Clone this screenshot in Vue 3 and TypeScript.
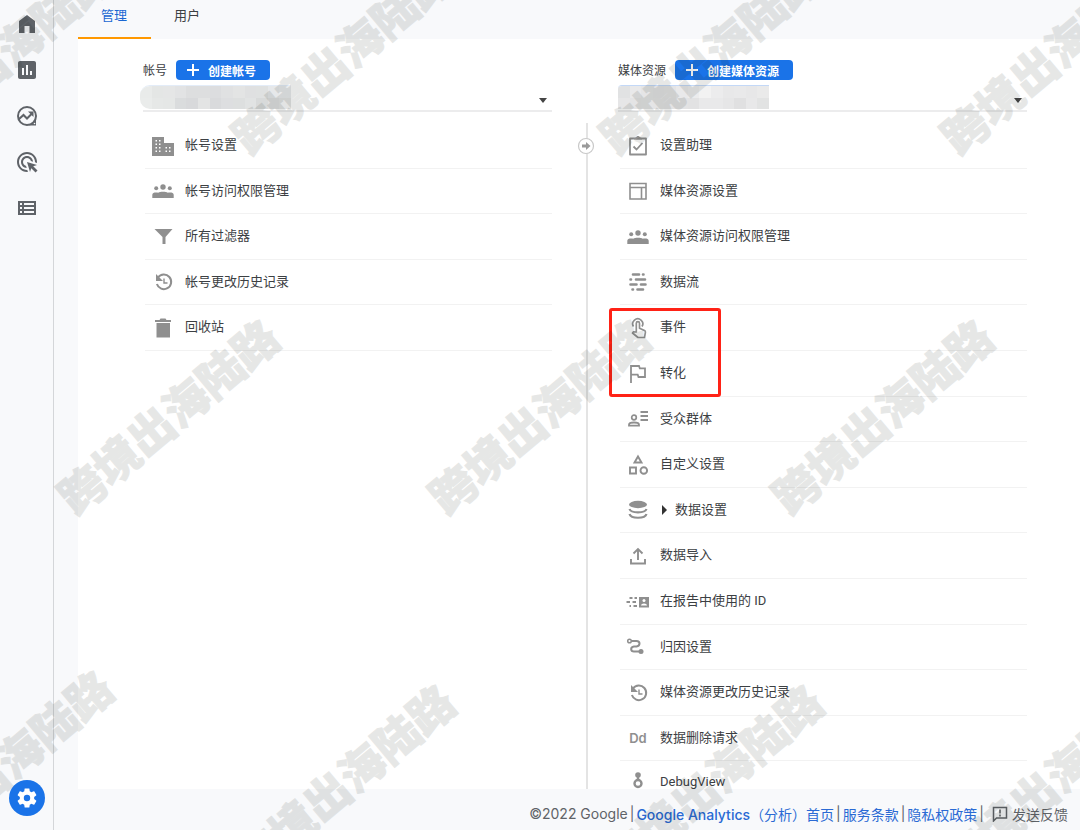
<script setup lang="ts">
import { ref } from 'vue'

interface Entry {
  icon: string
  label: string
  expandable?: boolean
  marked?: boolean
}

interface Column {
  id: string
  title: string
  create: string
  mosaic: string[][]
  entries: Entry[]
}

const navIcons = [
  { icon: 'home', label: '首页' },
  { icon: 'reports', label: '报告' },
  { icon: 'explore', label: '探索' },
  { icon: 'ads', label: '广告' },
  { icon: 'table', label: '配置' },
]

const tabs = ['管理', '用户']
const activeTab = ref(0)

const columns: Column[] = [
  {
    id: 'account',
    title: '帐号',
    create: '创建帐号',
    mosaic: [
      ['e9ebea', 'e4e6e5', 'e5e6e6', 'e2e3e4', 'dddedf', 'dddedf', 'dcdddf', 'e0e1e2', 'e3e4e4', 'dfe0e1', 'dfe1e1', 'e6e8ea', 'e9ebed'],
      ['eaeceb', 'e6e8e7', 'e5e7e6', 'dadcdd', 'd8d9db', 'e3e4e4', 'd9dadc', 'dddee0', 'dddfdf', 'e1e3e3', 'd8dada', 'dfe0e1', 'e3e4e4'],
    ],
    entries: [
      { icon: 'building', label: '帐号设置' },
      { icon: 'groups', label: '帐号访问权限管理' },
      { icon: 'filter', label: '所有过滤器' },
      { icon: 'history', label: '帐号更改历史记录' },
      { icon: 'trash', label: '回收站' },
    ],
  },
  {
    id: 'property',
    title: '媒体资源',
    create: '创建媒体资源',
    mosaic: [
      ['e1e2e3', 'e9e9ea', 'e5e5e6', 'e3e3e4', 'e4e4e5', 'e9e9ea', 'ececed', 'f2f2f2', 'ececed', 'e8e8e9', 'e9e9ea', 'e7e7e8', 'eaeaea'],
      ['e6e6e7', 'e4e4e5', 'e5e5e6', 'e4e4e5', 'e3e3e4', 'e3e3e4', 'e2e2e3', 'e9e9ea', 'e9e9ea', 'e6e6e7', 'e0e0e1', 'e8e8e9', 'e2e3e3'],
    ],
    entries: [
      { icon: 'assistant', label: '设置助理' },
      { icon: 'layout', label: '媒体资源设置' },
      { icon: 'groups', label: '媒体资源访问权限管理' },
      { icon: 'stream', label: '数据流' },
      { icon: 'touch', label: '事件', marked: true },
      { icon: 'flag', label: '转化' },
      { icon: 'audience', label: '受众群体' },
      { icon: 'shapes', label: '自定义设置' },
      { icon: 'database', label: '数据设置', expandable: true },
      { icon: 'upload', label: '数据导入' },
      { icon: 'identity', label: '在报告中使用的 ID' },
      { icon: 'route', label: '归因设置' },
      { icon: 'history', label: '媒体资源更改历史记录' },
      { icon: 'dd', label: '数据删除请求' },
      { icon: 'debug', label: 'DebugView' },
    ],
  },
]

const icons: Record<string, string> = {
  home: '<path d="M12 3 4 9v12h5.500v-7h5v7H20V9z"/>',
  reports:
    '<path d="M19 3H5c-1.100 0-2 .9-2 2v14c0 1.100.9 2 2 2h14c1.100 0 2-.9 2-2V5c0-1.100-.9-2-2-2zM9 17H7v-7h2v7zm4 0h-2V7h2v10zm4 0h-2v-4h2v4z"/>',
  explore:
    '<circle cx="12" cy="12" r="9" fill="none" stroke="currentColor" stroke-width="2"/><path d="M21 12v9.500h-9.500c5 0 9.500-4.500 9.500-9.500z"/><path d="M3.500 15.500 8.500 11l3.500 3.500L17 9.500" fill="none" stroke="currentColor" stroke-width="2"/><path d="M13 7.500h5.500V13z"/><circle cx="19.500" cy="19.500" r=".8" fill="#f8f9fb"/>',
  ads: '<path d="M11.710 17.990C8.530 17.840 6 15.220 6 12c0-3.310 2.690-6 6-6 3.220 0 5.840 2.530 5.990 5.710l-2.100-.63C15.480 9.310 13.890 8 12 8c-2.210 0-4 1.790-4 4 0 1.890 1.310 3.480 3.080 3.890l.63 2.100zM22 12c0 .3-.01.6-.04.9l-1.970-.59c.01-.1.01-.21.01-.31 0-4.420-3.580-8-8-8s-8 3.580-8 8 3.580 8 8 8c.1 0 .21 0 .31-.01l.59 1.970c-.3.03-.6.04-.9.04-5.520 0-10-4.480-10-10S6.480 2 12 2s10 4.480 10 10zm-3.770 4.260L22 15l-10-3 3 10 1.260-3.770 4.270 4.270 1.980-1.980-4.280-4.260z"/>',
  table:
    '<path fill-rule="evenodd" d="M3 5h18v14H3zM5 7v2h2V7zm4 0v2h10V7zM5 11v2h2v-2zm4 0v2h10v-2zM5 15v2h2v-2zm4 0v2h10v-2z"/>',
  gear: '<path fill-rule="evenodd" d="M19.140 12.940c.04-.3.06-.61.06-.94 0-.32-.02-.64-.07-.94l2.030-1.580c.18-.14.23-.41.12-.61l-1.920-3.320c-.12-.22-.37-.29-.59-.22l-2.390.96c-.5-.38-1.030-.7-1.620-.94l-.36-2.540c-.04-.24-.24-.41-.48-.41h-3.840c-.24 0-.43.17-.47.41l-.36 2.540c-.59.24-1.130.57-1.620.94l-2.390-.96c-.22-.08-.47 0-.59.22L2.740 8.870c-.12.21-.08.47.12.61l2.030 1.580c-.05.3-.09.63-.09.94s.02.64.07.94l-2.030 1.580c-.18.14-.23.41-.12.61l1.920 3.320c.12.22.37.29.59.22l2.390-.96c.5.38 1.030.7 1.620.94l.36 2.540c.05.24.24.41.48.41h3.840c.24 0 .44-.17.47-.41l.36-2.540c.59-.24 1.130-.56 1.620-.94l2.390.96c.22.08.47 0 .59-.22l1.920-3.320c.12-.22.07-.47-.12-.61zM12 15.200a3.200 3.200 0 1 1 0-6.400 3.200 3.200 0 0 1 0 6.400z"/>',
  building:
    '<path d="M1 3h12v6h10v13H1z"/><path fill="#fff" d="M4.500 6h1.500v1.500H4.500zM8 6h1.500v1.500H8zM4.500 9.500H6V11H4.500zM8 9.500h1.500V11H8zM4.500 13H6v1.500H4.500zM8 13h1.500v1.500H8zM4.500 16.500H6V18H4.500zM8 16.500h1.500V18H8zM14.500 13H16v1.500h-1.500zM18 13h1.500v1.500H18zM14.500 16.500H16V18h-1.500zM18 16.500h1.500V18H18z"/>',
  groups:
    '<circle cx="12" cy="8" r="2.700"/><circle cx="5.200" cy="9.300" r="2"/><circle cx="18.800" cy="9.300" r="2"/><path d="M1.300 19v-3.200C1.300 14 3 13.500 5 13.500c1 0 1.600.1 2.200.2C8.300 13 10 12.700 12 12.700s3.700.3 4.800 1c.6-.1 1.200-.2 2.200-.2 2 0 3.700.5 3.700 2.300V19z"/>',
  filter: '<path d="M3.500 4h18l-7 8v7h-3v-7z"/>',
  history:
    '<path d="M7 7.500A7.300 7.300 0 1 1 5.900 14" fill="none" stroke="currentColor" stroke-width="2"/><path d="M5 4v7h7z"/><path d="M13 8.500v4.500h3.500" fill="none" stroke="currentColor" stroke-width="1.400"/>',
  trash: '<path d="M9.500 2.500h5l1 1.500h4.500v2H4V4h4.500zM5.500 7h13.500v14.500H5.500z"/>',
  assistant:
    '<path d="M4 4.500h16v16H4z" fill="none" stroke="currentColor" stroke-width="1.800" stroke-linejoin="round"/><path d="m7.500 12.500 3 3 6-6.500" fill="none" stroke="currentColor" stroke-width="1.800"/><path d="M8 5.500c0-1.500 1-2 2-2 .3-1 1-1.500 2-1.500s1.700.5 2 1.500c1 0 2 .5 2 2z"/>',
  layout: '<path d="M4 4.500h16v15.500H4zM4 8.500h16M15.500 8.500V20" fill="none" stroke="currentColor" stroke-width="1.600"/>',
  stream:
    '<path d="M7 4.500h6M17 4.500h.5M4.500 9.500h.5M10 9.500h9M4.500 14.500h6M15 14.500h4.500M6.500 19.500h.5M11.500 19.500h5.500" fill="none" stroke="currentColor" stroke-width="2.600" stroke-linecap="round"/>',
  touch:
    '<path d="M7.500 10.500a5 5 0 1 1 8.500 0M10.300 16V7.200a1.600 1.600 0 0 1 3.200 0v5l5 2.300c.8.4 1 1 .9 1.800l-.9 5.200h-6.500L6.500 17l1-1.200z" fill="none" stroke="currentColor" stroke-width="1.700" stroke-linejoin="round"/>',
  flag: '<path d="M5 21V4h8l.8 2.300H19v8.700h-6.500l-.8-2.300H5" fill="none" stroke="currentColor" stroke-width="1.800"/>',
  audience:
    '<circle cx="8" cy="10.500" r="2.300" fill="none" stroke="currentColor" stroke-width="1.700"/><path d="M3 18.700v-1c0-1.600 2.500-2.200 5-2.200s5 .6 5 2.200v1zM14.500 5H22M14.500 9H22M14.500 13H22" fill="none" stroke="currentColor" stroke-width="1.800"/>',
  shapes:
    '<path d="m12 3.500 3.500 6h-7zM4 14.500h6v6H4z" fill="none" stroke="currentColor" stroke-width="1.900"/><circle cx="17.800" cy="17.500" r="3.300" fill="none" stroke="currentColor" stroke-width="1.900"/>',
  database:
    '<ellipse cx="12" cy="6.500" rx="9" ry="3.700"/><path d="M3.500 11c1.500 4.500 15.500 4.500 17 0M3.500 16c1.500 5 15.500 5 17 0" fill="none" stroke="currentColor" stroke-width="2.200"/>',
  upload:
    '<path d="M5 15v4.500h14V15M12 16V5.500M7.500 9.500 12 5l4.500 4.500" fill="none" stroke="currentColor" stroke-width="1.900"/>',
  identity:
    '<path d="M3.500 8h3M8.500 8h2.500M.5 12h3.500M6.500 12h3.500M3.500 16h1.500M7.500 16h3.500" fill="none" stroke="currentColor" stroke-width="1.800"/><path d="M13 7h10v10.500H13z"/><circle cx="18" cy="10.500" r="1.500" fill="#fff"/><path d="M15 15.500c0-2.800 6-2.800 6 0z" fill="#fff"/>',
  route:
    '<circle cx="3.500" cy="6" r="1.800" fill="none" stroke="currentColor" stroke-width="1.500"/><path d="M5.500 6h5c4 0 4 5 0 5.500H8c-4 .5-3.500 5 0 5h6" fill="none" stroke="currentColor" stroke-width="2"/><circle cx="15" cy="16.500" r="2.500"/>',
  debug:
    '<circle cx="12" cy="3" r="2.800"/><path d="M12 3v5" stroke="currentColor" stroke-width="2.400"/><circle cx="12" cy="11.500" r="3.500" fill="none" stroke="currentColor" stroke-width="2.400"/>',
}

const stamps = [
  { x: 1, y: 54 },
  { x: 341, y: 55 },
  { x: 709, y: 55 },
  { x: 1050, y: 55 },
  { x: 167, y: 415 },
  { x: 538, y: 415 },
  { x: 881, y: 415 },
  { x: 1, y: 766 },
  { x: 343, y: 780 },
  { x: 711, y: 780 },
  { x: 1050, y: 780 },
]
</script>

<template>
  <div class="app">
    <nav class="rail" aria-label="主导航">
      <button v-for="n in navIcons" :key="n.icon" class="rail-btn" type="button" :aria-label="n.label">
        <svg viewBox="0 0 24 24" fill="currentColor" v-html="icons[n.icon]" />
      </button>
      <button class="gear" type="button" aria-label="管理">
        <svg viewBox="0 0 24 24" fill="currentColor" v-html="icons.gear" />
      </button>
    </nav>

    <div class="main">
      <header class="tabs" role="tablist">
        <button
          v-for="(t, i) in tabs"
          :key="t"
          class="tab"
          :class="{ active: i === activeTab }"
          type="button"
          role="tab"
          :aria-selected="i === activeTab"
          @click="activeTab = i"
        >
          {{ t }}
        </button>
      </header>

      <main class="panel">
        <template v-for="(c, ci) in columns" :key="c.id">
          <div v-if="ci > 0" class="divider">
            <svg class="knob" viewBox="0 0 18 18" aria-hidden="true">
              <circle cx="9" cy="9" r="7.500" fill="#fff" stroke="#c9c9c9" stroke-width="1.200" />
              <path d="M5 7.500h4V5l4.500 4L9 13v-2.500H5z" fill="#9a9a9a" />
            </svg>
          </div>
          <section class="column">
            <div class="head">
              <label class="title" :for="c.id">{{ c.title }}</label>
              <button class="create" type="button">
                <svg viewBox="0 0 14 14" aria-hidden="true"><path d="M7 1v12M1 7h12" stroke="#fff" stroke-width="2" /></svg>
                <span>{{ c.create }}</span>
              </button>
            </div>
            <div class="picker">
              <select :id="c.id"><option value=""></option></select>
              <svg class="mosaic" :class="c.id" viewBox="0 0 13 2" preserveAspectRatio="none" shape-rendering="crispEdges" aria-hidden="true">
                <template v-for="(line, r) in c.mosaic" :key="r">
                  <rect v-for="(tone, k) in line" :key="k" :x="k" :y="r" width="1" height="1" :fill="'#' + tone" />
                </template>
              </svg>
              <svg class="caret" viewBox="0 0 8 5" aria-hidden="true"><path d="M0 0h8L4 5z" fill="#444" /></svg>
            </div>
            <ul class="list">
              <li v-for="e in c.entries" :key="e.label" class="row">
                <a href="#" class="link">
                  <span v-if="e.icon === 'dd'" class="icon letters">Dd</span>
                  <svg v-else class="icon" viewBox="0 0 24 24" fill="currentColor" aria-hidden="true" v-html="icons[e.icon]" />
                  <svg v-if="e.expandable" class="expand" viewBox="0 0 5 10" aria-hidden="true"><path d="M0 0v10l5-5z" fill="#333" /></svg>
                  <span>{{ e.label }}</span>
                </a>
                <span v-if="e.marked" class="marker" />
              </li>
            </ul>
          </section>
        </template>
      </main>

      <footer class="foot">
        <span>©2022 Google</span>
        <span>|</span>
        <a href="#"><b>Google Analytics</b>（分析）首页</a>
        <span>|</span>
        <a href="#">服务条款</a>
        <span>|</span>
        <a href="#">隐私权政策</a>
        <span>|</span>
        <button class="feedback" type="button">
          <svg viewBox="0 0 16 16" aria-hidden="true">
            <path d="M1.500 15V1.500h13v10.500H4.500z" fill="none" stroke="currentColor" stroke-width="1.500" />
            <path d="M8 3.500v4M8 8.500v2" stroke="currentColor" stroke-width="1.600" />
          </svg>
          <span>发送反馈</span>
        </button>
      </footer>
    </div>

    <div class="stamps" aria-hidden="true">
      <span v-for="(s, i) in stamps" :key="i" class="stamp" :style="{ left: s.x + 'px', top: s.y + 'px' }">跨境出海陆路</span>
    </div>
  </div>
</template>

<style>
body {
  margin: 0;
}
</style>

<style scoped>
.app {
  position: relative;
  display: flex;
  height: 100vh;
  overflow: hidden;
  background: #f8f9fb;
  color: #3c4043;
  font-family: Roboto, "Noto Sans CJK SC", sans-serif;
  font-size: 13px;
}

button {
  border: 0;
  padding: 0;
  margin: 0;
  background: none;
  font: inherit;
  color: inherit;
  cursor: pointer;
}

svg {
  display: block;
  flex: none;
}

.rail {
  flex: none;
  box-sizing: border-box;
  width: 54px;
  padding: 12px 0 14px;
  border-right: 1px solid #d4d6d9;
  display: flex;
  flex-direction: column;
  align-items: center;
  gap: 22px;
  color: #5f6368;
}

.rail-btn,
.rail-btn svg {
  width: 24px;
  height: 24px;
}

.gear {
  display: flex;
  align-items: center;
  justify-content: center;
  width: 36px;
  height: 36px;
  margin-top: auto;
  border-radius: 50%;
  background: #1a73e8;
  color: #fff;
}

.gear svg {
  width: 24px;
  height: 24px;
}

.main {
  flex: 1;
  min-width: 0;
  display: flex;
  flex-direction: column;
}

.tabs {
  flex: none;
  display: flex;
  height: 39px;
  padding-left: 24px;
}

.tab {
  box-sizing: border-box;
  padding: 0 24px 8px 23px;
  border-bottom: 2px solid transparent;
}

.tab.active {
  color: #1a67d2;
  border-bottom-color: #ff9800;
}

.panel {
  flex: 1;
  min-height: 0;
  overflow: hidden;
  box-sizing: border-box;
  margin-left: 24px;
  padding: 21px 53px 0 65px;
  background: #fff;
  display: grid;
  grid-template-columns: 1fr 66px 1fr;
}

.column {
  min-width: 0;
}

.head {
  display: flex;
  align-items: center;
  gap: 9px;
  height: 20px;
  font-size: 12px;
}

.title {
  padding-bottom: 2px;
}

.create {
  display: flex;
  align-items: center;
  gap: 8px;
  height: 20px;
  padding: 0 14px 0 10px;
  border-radius: 4px;
  background: #1a73e8;
  color: #fff;
  font-weight: 700;
}

.create svg {
  width: 14px;
  height: 14px;
}

.picker {
  position: relative;
  height: 30px;
  border-bottom: 2px solid #ececed;
}

.picker select {
  width: 100%;
  height: 100%;
  border: 0;
  background: transparent;
  appearance: none;
}

.mosaic {
  position: absolute;
  left: 0;
  bottom: 1px;
  width: 151px;
  height: 23px;
  border-top: 1px solid #c3d8f7;
  border-radius: 4px 0 0 0;
  pointer-events: none;
}

.mosaic.account {
  left: -3px;
  border-top-color: #e3ecf8;
  border-radius: 10px 0 0 10px;
}

.caret {
  position: absolute;
  right: 5px;
  bottom: 7px;
  width: 8px;
  height: 5px;
  pointer-events: none;
}

.list {
  list-style: none;
  margin: 11px 0 0 2px;
  padding: 0;
}

.row {
  position: relative;
  box-sizing: border-box;
  height: 46px;
  border-bottom: 1px solid #f2f2f2;
}

.row:nth-child(5n + 2),
.row:nth-child(5n + 4) {
  height: 45px;
}

.link {
  display: flex;
  align-items: center;
  height: 100%;
  padding-left: 6px;
  color: inherit;
  text-decoration: none;
}

.link > span:last-child {
  padding-bottom: 4px;
}

.icon {
  width: 24px;
  height: 24px;
  margin-right: 10px;
  color: #8f8f8f;
}

.letters {
  font-family: Inter, sans-serif;
  font-weight: 600;
  line-height: 24px;
  text-align: center;
}

.expand {
  width: 5px;
  height: 10px;
  margin: 0 8px 0 2px;
}

.marker {
  position: absolute;
  left: -11px;
  top: 3px;
  z-index: 1;
  box-sizing: border-box;
  width: 112px;
  height: 89px;
  border: 3px solid #ff2216;
  border-radius: 3px;
  pointer-events: none;
}

.divider {
  display: flex;
  flex-direction: column;
  align-items: center;
  padding: 63px 0 0 2px;
  background: linear-gradient(#e4e4e4, #e4e4e4) 34px 63px / 2px 100% no-repeat;
}

.knob {
  width: 18px;
  height: 18px;
  margin-top: 14px;
}

.foot {
  flex: none;
  box-sizing: border-box;
  display: flex;
  align-items: center;
  justify-content: flex-end;
  gap: 2px;
  height: 41px;
  padding: 8px 12px 0 0;
  font-family: Inter, "Noto Sans CJK SC", sans-serif;
  font-size: 14px;
  white-space: nowrap;
  color: #5f6368;
}

.foot a {
  color: #2a6ad4;
  text-decoration: none;
}

.foot b {
  font-weight: 500;
}

.feedback {
  display: flex;
  align-items: center;
  gap: 4px;
  padding-left: 6px;
}

.feedback svg {
  width: 16px;
  height: 16px;
}

.stamps {
  position: absolute;
  inset: 0;
  z-index: 2;
  overflow: hidden;
  pointer-events: none;
}

.stamp {
  position: absolute;
  transform: translate(-50%, -50%) rotate(-40deg);
  font-family: "Noto Sans CJK SC", sans-serif;
  font-size: 45px;
  font-weight: 900;
  line-height: 1;
  white-space: nowrap;
  color: #141e14;
  -webkit-text-stroke: 1px #141e14;
  opacity: 0.1;
}
</style>
